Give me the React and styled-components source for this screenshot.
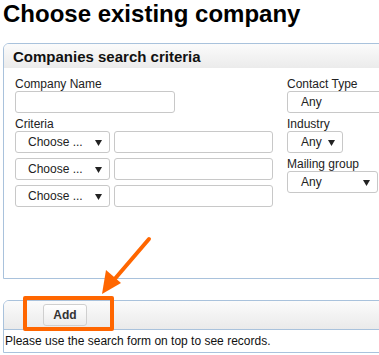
import React from "react";
import styled, { createGlobalStyle } from "styled-components";

const Global = createGlobalStyle`
  html, body { margin: 0; padding: 0; overflow: hidden; background: #fff; }
  body { font-family: "Liberation Sans", Arial, sans-serif; font-size: 12px; color: #222; }
`;

const Page = styled.div`
  position: relative;
  width: 379px;
  height: 355px;
  overflow: hidden;
`;

const Title = styled.h1`
  margin: 0 0 16px 0;
  padding-left: 3px;
  font-size: 24px;
  line-height: 27px;
  font-weight: bold;
  color: #000;
  white-space: nowrap;
`;

const Panel = styled.section`
  margin-left: 3px;
  width: 520px;
  border: 1px solid #a9c2dc;
  border-top-left-radius: 6px;
  border-top-right-radius: 6px;
  background: #fff;
  overflow: hidden;
`;

const PanelHeader = styled.div`
  height: 24px;
  padding-left: 9px;
  display: flex;
  align-items: center;
  background: linear-gradient(#fbfbfb, #ebebeb);
  font-size: 15px;
  font-weight: bold;
  color: #111;
`;

const PanelBody = styled.div`
  height: 201px;
  padding: 9px 0 0 11px;
  display: flex;
  gap: 11px;
`;

const Column = styled.div`
  display: flex;
  flex-direction: column;
  width: ${(p) => p.$w}px;
`;

const Label = styled.label`
  display: block;
  font-size: 12px;
  line-height: 14px;
  color: #222;
  margin-top: ${(p) => p.$mt || 0}px;
  white-space: nowrap;
`;

const TextInput = styled.div`
  box-sizing: border-box;
  width: ${(p) => p.$w}px;
  height: 22px;
  border: 1px solid #c8c8c8;
  border-radius: 3px;
  background: #fff;
  flex: none;
`;

const Select = styled.div`
  box-sizing: border-box;
  width: ${(p) => p.$w}px;
  height: 22px;
  border: 1px solid #c8c8c8;
  border-radius: 3px;
  background: #fff;
  display: flex;
  align-items: center;
  justify-content: space-between;
  padding: 0 7px 0 ${(p) => p.$pl || 12}px;
  font-size: 12px;
  color: #222;
  flex: none;
  white-space: nowrap;
`;

const Arrow = () => (
  <svg width="7" height="7" viewBox="0 0 7 7">
    <polygon points="0,1 7,1 3.5,7" fill="#222" />
  </svg>
);

const CriteriaRows = styled.div`
  display: flex;
  flex-direction: column;
  gap: 5px;
`;

const Row = styled.div`
  display: flex;
  gap: 4px;
`;

const ResultsPanel = styled.section`
  margin: 21px 0 0 3px;
  width: 520px;
  border: 1px solid #a9c2dc;
  border-top-left-radius: 6px;
  border-top-right-radius: 6px;
  overflow: hidden;
`;

const Toolbar = styled.div`
  height: 29px;
  box-sizing: border-box;
  padding: 3px 0 0 39px;
  background: linear-gradient(#fbfbfb, #eaeaea);
  border-bottom: 1px solid #a9c2dc;
`;

const Button = styled.button`
  width: 44px;
  height: 22px;
  border: 1px solid #cfcfcf;
  border-radius: 3px;
  background: linear-gradient(#ffffff, #ececec);
  font-family: "Liberation Sans", Arial, sans-serif;
  font-size: 12px;
  font-weight: bold;
  color: #333;
  padding: 0;
`;

const Message = styled.div`
  padding: 4px 0 4px 1px;
  font-size: 12px;
  line-height: 14px;
  color: #111;
  white-space: nowrap;
`;

const Highlight = styled.div`
  position: absolute;
  left: 23px;
  top: 296px;
  width: 91px;
  height: 35px;
  box-sizing: border-box;
  border: 4px solid #ff6600;
  border-radius: 2px;
`;

const Annotation = styled.svg`
  position: absolute;
  left: 0;
  top: 0;
  pointer-events: none;
`;

export default function App() {
  return (
    <Page>
      <Global />
      <Title>Choose existing company</Title>
      <Panel>
        <PanelHeader>Companies search criteria</PanelHeader>
        <PanelBody>
          <Column $w={261}>
            <Label>Company Name</Label>
            <TextInput $w={160} />
            <Label $mt={4}>Criteria</Label>
            <CriteriaRows>
              {[0, 1, 2].map((i) => (
                <Row key={i}>
                  <Select $w={95}>
                    <span>Choose ...</span>
                    <Arrow />
                  </Select>
                  <TextInput $w={159} />
                </Row>
              ))}
            </CriteriaRows>
          </Column>
          <Column $w={160}>
            <Label>Contact Type</Label>
            <Select $w={150} $pl={13}>
              <span>Any</span>
            </Select>
            <Label $mt={4}>Industry</Label>
            <Select $w={56} $pl={13}>
              <span>Any</span>
              <Arrow />
            </Select>
            <Label $mt={4}>Mailing group</Label>
            <Select $w={91} $pl={13}>
              <span>Any</span>
              <Arrow />
            </Select>
          </Column>
        </PanelBody>
      </Panel>
      <ResultsPanel>
        <Toolbar>
          <Button>Add</Button>
        </Toolbar>
        <Message>Please use the search form on top to see records.</Message>
      </ResultsPanel>
      <Highlight />
      <Annotation width="379" height="355">
        <line x1="149" y1="239" x2="113" y2="281" stroke="#ff6600" strokeWidth="4" strokeLinecap="round" />
        <polygon points="102,294 106,270 121,283" fill="#ff6600" />
      </Annotation>
    </Page>
  );
}
